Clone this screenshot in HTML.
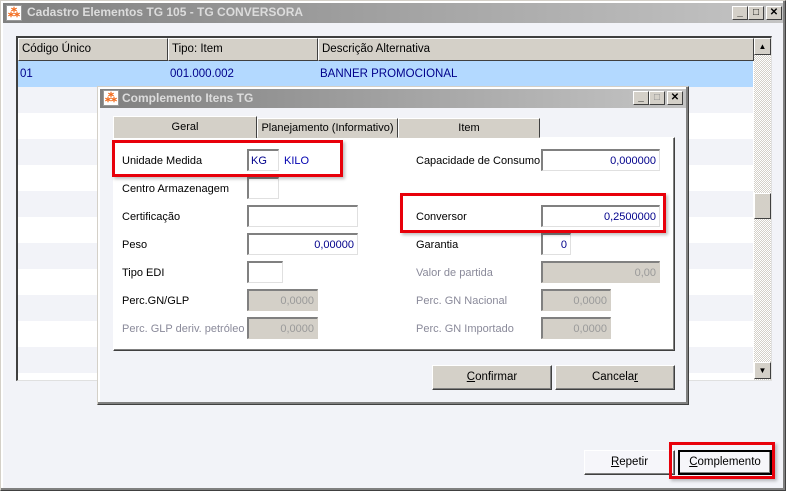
<!DOCTYPE html>
<html><head><meta charset="utf-8"><style>
*{box-sizing:border-box;margin:0;padding:0}
body{width:786px;height:491px;overflow:hidden;font-family:"Liberation Sans",Tahoma,sans-serif;font-size:11px;color:#000;background:#f2f3f8;position:relative}
.a{position:absolute}
.tb{background:linear-gradient(90deg,#808080,#c4c4c4);color:#dcdcdc;font-weight:bold;font-size:12px;line-height:19px}
.icon{position:absolute;width:16px;height:16px;background:#fff;border:1px solid #999;color:#f26a1b;font-size:12px;line-height:14px;text-align:center;font-weight:bold}
.cb{position:absolute;width:16px;height:14px;background:#d4d0c8;border:1px solid;border-color:#fff #404040 #404040 #fff;font-size:10px;line-height:12px;text-align:center;color:#000;font-weight:bold}
.hd{position:absolute;top:0;height:23px;background:#d4d0c8;border:1px solid;border-color:#fff #404040 #404040 #fff;padding:4px 0 0 3px;font-size:11.5px}
.row{position:absolute;left:0;width:735px;height:26px}
.in{position:absolute;height:22px;background:#fff;border:1px solid;border-color:#808080 #e0e0e0 #e0e0e0 #808080;border-width:2px 1px 1px 2px;text-align:right;padding:4px 3px 0 0;color:#00008b}
.dis{background:#d4d0c8;color:#9a9a9a;border-color:#808080 #d4d0c8 #d4d0c8 #808080}
.lb{position:absolute}
.gr{color:#8a8a9a}
.btn{position:absolute;height:25px;background:#d4d0c8;border:1px solid;border-color:#fff #404040 #404040 #fff;box-shadow:inset -1px -1px #808080;text-align:center;line-height:23px;font-size:11.5px}
.red{position:absolute;border:3px solid #e8000a;box-shadow:2px 2px 3px rgba(0,0,0,.25)}
.tab{position:absolute;top:118px;height:20px;background:#d4d0c8;border:1px solid;border-color:#fff #404040 #d4d0c8 #fff;text-align:center;line-height:19px}
</style></head><body>
<div class="a" style="left:0;top:0;width:786px;height:491px;border:1px solid;border-color:#d4d0c8 #404040 #404040 #d4d0c8;box-shadow:inset -2px -2px #808080,inset 2px 2px #fff"></div>
<div class="a tb" style="left:3px;top:3px;width:780px;height:20px"><div class="icon" style="left:3px;top:2px">⁂</div><span style="position:absolute;left:24px;top:0">Cadastro Elementos TG 105 - TG CONVERSORA</span>
<div class="cb" style="left:729px;top:3px">_</div><div class="cb" style="left:745px;top:3px">□</div><div class="cb" style="left:763px;top:3px">✕</div></div>

<div class="a" style="left:16px;top:36px;width:756px;height:345px;border:1px solid;border-color:#404040 #e0e0e0 #e0e0e0 #404040;border-width:2px 1px 1px 2px;background:#fff;overflow:hidden">
<div class="hd" style="left:0;width:150px">Código Único</div>
<div class="hd" style="left:150px;width:150px">Tipo: Item</div>
<div class="hd" style="left:300px;width:436px">Descrição Alternativa</div>
<div class="row" style="top:23px;background:#b3d9ff;color:#00008b;font-size:11.5px"><span class="a" style="left:2px;top:7px">01</span><span class="a" style="left:152px;top:7px">001.000.002</span><span class="a" style="left:302px;top:7px">BANNER PROMOCIONAL</span></div>
<div class="row" style="top:49px;background:#f2f3f8"></div>
<div class="row" style="top:101px;background:#f2f3f8"></div>
<div class="row" style="top:153px;background:#f2f3f8"></div>
<div class="row" style="top:205px;background:#f2f3f8"></div>
<div class="row" style="top:257px;background:#f2f3f8"></div>
<div class="row" style="top:309px;background:#f2f3f8"></div>
<div class="a" style="left:736px;top:0;width:17px;height:342px;background:repeating-conic-gradient(#d4d0c8 0 25%,#fff 0 50%) 0 0/2px 2px"></div>
<div class="cb" style="left:736px;top:0;width:17px;height:17px;line-height:15px;font-size:8px">▲</div>
<div class="cb" style="left:736px;top:155px;width:17px;height:26px"></div>
<div class="cb" style="left:736px;top:324px;width:17px;height:17px;line-height:15px;font-size:8px">▼</div>
</div>

<div class="a" style="left:97px;top:86px;width:592px;height:319px;background:#f2f3f8;border:1px solid;border-color:#d4d0c8 #404040 #404040 #d4d0c8;box-shadow:inset -2px -2px #808080,inset 2px 2px #fff"></div>
<div class="a tb" style="left:100px;top:89px;width:586px;height:19px"><div class="icon" style="left:3px;top:1px">⁂</div><span style="position:absolute;left:22px;top:0">Complemento Itens TG</span>
<div class="cb" style="left:533px;top:2px">_</div><div class="cb" style="left:549px;top:2px;color:#888">□</div><div class="cb" style="left:567px;top:2px">✕</div></div>

<div class="a" style="left:113px;top:137px;width:562px;height:214px;background:#fff;border:1px solid;border-color:#fff #404040 #404040 #fff;box-shadow:inset -1px -1px #808080"></div>
<div class="tab" style="left:113px;width:144px;top:116px;height:22px;border-bottom:none;line-height:21px">Geral</div>
<div class="tab" style="left:257px;width:141px">Planejamento (Informativo)</div>
<div class="tab" style="left:398px;width:142px">Item</div>

<div class="lb" style="left:122px;top:155px">Unidade Medida</div>
<div class="in" style="left:247px;top:149px;width:32px;text-align:left;padding-left:2px">KG</div>
<div class="lb" style="left:284px;top:155px;color:#0000b0">KILO</div>
<div class="lb" style="left:122px;top:183px">Centro Armazenagem</div>
<div class="in" style="left:247px;top:177px;width:32px"></div>
<div class="lb" style="left:122px;top:211px">Certificação</div>
<div class="in" style="left:247px;top:205px;width:111px"></div>
<div class="lb" style="left:122px;top:239px">Peso</div>
<div class="in" style="left:247px;top:233px;width:111px">0,00000</div>
<div class="lb" style="left:122px;top:267px">Tipo EDI</div>
<div class="in" style="left:247px;top:261px;width:36px"></div>
<div class="lb" style="left:122px;top:295px">Perc.GN/GLP</div>
<div class="in dis" style="left:247px;top:289px;width:71px">0,0000</div>
<div class="lb gr" style="left:122px;top:323px">Perc. GLP deriv. petróleo</div>
<div class="in dis" style="left:247px;top:317px;width:71px">0,0000</div>

<div class="lb" style="left:416px;top:155px">Capacidade de Consumo</div>
<div class="in" style="left:541px;top:149px;width:119px">0,000000</div>
<div class="lb" style="left:416px;top:211px">Conversor</div>
<div class="in" style="left:541px;top:205px;width:119px">0,2500000</div>
<div class="lb" style="left:416px;top:239px">Garantia</div>
<div class="in" style="left:541px;top:233px;width:30px">0</div>
<div class="lb gr" style="left:416px;top:267px">Valor de partida</div>
<div class="in dis" style="left:541px;top:261px;width:119px">0,00</div>
<div class="lb gr" style="left:416px;top:295px">Perc. GN Nacional</div>
<div class="in dis" style="left:541px;top:289px;width:70px">0,0000</div>
<div class="lb gr" style="left:416px;top:323px">Perc. GN Importado</div>
<div class="in dis" style="left:541px;top:317px;width:70px">0,0000</div>

<div class="red" style="left:112px;top:140px;width:231px;height:37px"></div>
<div class="red" style="left:400px;top:193px;width:266px;height:40px"></div>

<div class="btn" style="left:432px;top:365px;width:120px"><u>C</u>onfirmar</div>
<div class="btn" style="left:555px;top:365px;width:120px">Cancela<u>r</u></div>

<div class="btn" style="left:584px;top:450px;width:91px;background:#f6f6fa"><u>R</u>epetir</div>
<div class="btn" style="left:678px;top:450px;width:94px;background:#f6f6fa;border:2px solid #000;line-height:21px"><u>C</u>omplemento</div>
<div class="red" style="left:669px;top:442px;width:106px;height:37px"></div>
</body></html>
